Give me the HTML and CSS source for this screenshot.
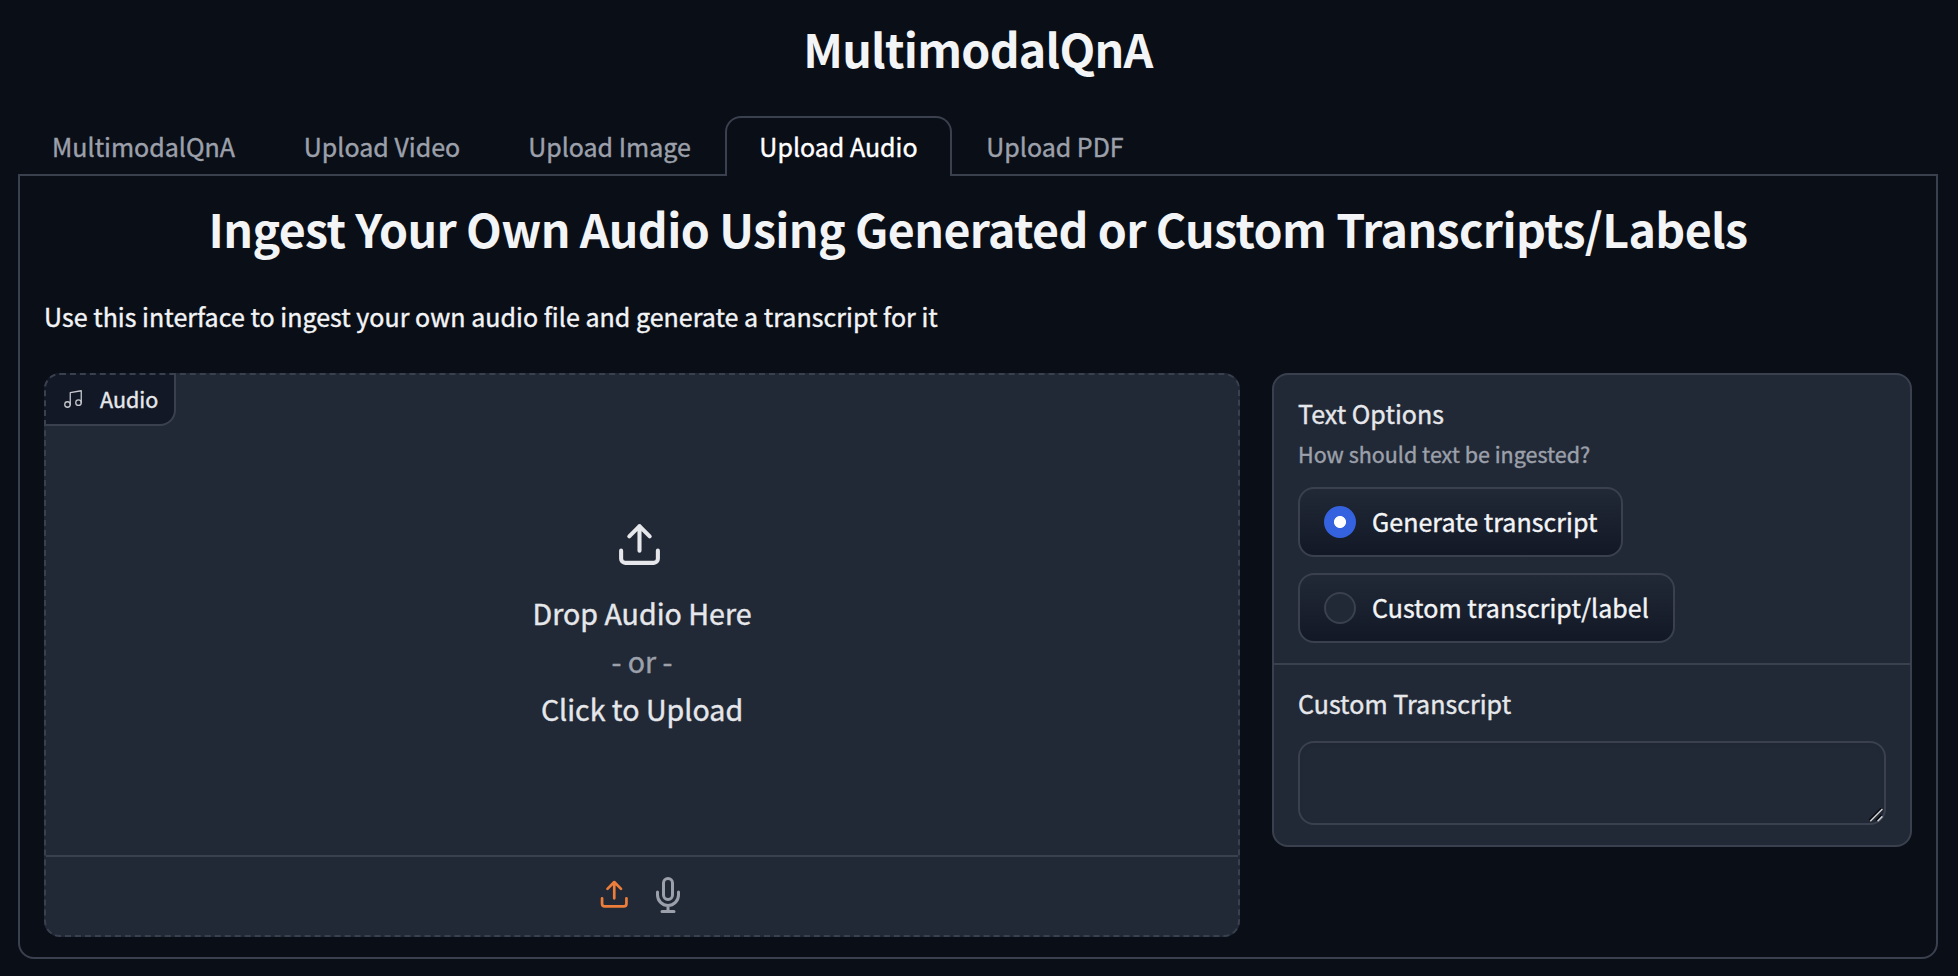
FILE: index.html
```html
<!DOCTYPE html>
<html lang="en">
<head>
<meta charset="utf-8">
<title>MultimodalQnA</title>
<link rel="stylesheet" href="styles.css">
</head>
<body>
<main class="app">
  <h1 class="title"><span class="app-name">MultimodalQnA</span></h1>
  <nav class="tabs">
    <button class="tab tab-qna">MultimodalQnA</button>
    <button class="tab tab-video">Upload Video</button>
    <button class="tab tab-image">Upload Image</button>
    <button class="tab tab-audio active">Upload Audio</button>
    <button class="tab tab-pdf">Upload PDF</button>
  </nav>
  <section class="panel">
    <h2 class="title"><span class="heading">Ingest Your Own Audio Using Generated or Custom Transcripts/Labels</span></h2>
    <p class="intro">Use this interface to ingest your own audio file and generate a transcript for it</p>
    <div class="row">
      <div class="audio">
        <div class="audio-label">
          <svg class="music" viewBox="0 0 24 24"><path d="M9 18V5l12-2v13"/><circle cx="6" cy="18" r="3"/><circle cx="18" cy="16" r="3"/></svg>
          <span>Audio</span>
        </div>
        <div class="drop">
          <svg class="upload" viewBox="0 0 24 24"><path d="M21 15v4a2 2 0 0 1-2 2H5a2 2 0 0 1-2-2v-4M17 8l-5-5-5 5M12 3v12"/></svg>
          <span class="drop-main">Drop Audio Here</span>
          <span class="drop-or">- or -</span>
          <span class="drop-click">Click to Upload</span>
        </div>
        <div class="sources">
          <svg class="source-upload" viewBox="0 0 24 24"><path d="M21 15v4a2 2 0 0 1-2 2H5a2 2 0 0 1-2-2v-4M17 8l-5-5-5 5M12 3v12"/></svg>
          <svg class="source-mic" viewBox="0 0 24 24"><path d="M12 1a3 3 0 0 0-3 3v8a3 3 0 0 0 6 0V4a3 3 0 0 0-3-3zM19 10v2a7 7 0 0 1-14 0v-2M12 19v4M8 23h8"/></svg>
        </div>
      </div>
      <div class="form">
        <div class="options">
          <div class="label">Text Options</div>
          <div class="info">How should text be ingested?</div>
          <div class="choices">
            <label class="choice choice-generate"><span class="radio checked"></span><span>Generate transcript</span></label>
            <label class="choice choice-custom"><span class="radio"></span><span>Custom transcript/label</span></label>
          </div>
        </div>
        <div class="custom">
          <div class="label">Custom Transcript</div>
          <div class="field">
            <textarea class="input"></textarea>
            <svg class="grip" viewBox="0 0 14 14"><path class="grip-dark" d="M0 12.5L12.5 0M7 12.5L12.5 7"/><path class="grip-light" d="M1.2 13.2L13.4 1M8.6 13.2l4.8-4.8"/></svg>
          </div>
        </div>
      </div>
    </div>
  </section>
</main>
</body>
</html>
```
FILE: styles.css
```css
* { box-sizing: border-box; }

body {
  margin: 0;
  background: #0a0e17;
  color: #f3f4f6;
  font-family: "Noto Sans CJK JP", "Noto Sans", sans-serif;
  font-size: 25px;
  -webkit-text-stroke: 0.4px currentColor;
}

svg {
  display: block;
  flex: none;
  fill: none;
  stroke: currentColor;
  stroke-width: 2;
  stroke-linecap: round;
  stroke-linejoin: round;
}

.app { padding: 18px 20px 0 18px; height: 976px; overflow: hidden; }

.title {
  margin: 0;
  font-size: 46.5px;
  font-weight: 700;
  line-height: 60px;
  letter-spacing: -0.62px;
  text-align: center;
  white-space: nowrap;
  -webkit-text-stroke: 0;
}
.app-name { letter-spacing: -0.75px; }

.tabs { display: flex; margin-top: 38px; }

.tab {
  height: 60px;
  padding: 0 1px 2px 0;
  border: 2px solid transparent;
  border-bottom: 0;
  border-radius: 16px 16px 0 0;
  background: none;
  color: #9ca0ab;
  font: inherit;
  line-height: 56px;
  white-space: nowrap;
}
.tab-qna { width: 252px; }
.tab-video { width: 225px; }
.tab-image { width: 230px; }
.tab-audio { width: 227px; }
.tab-pdf { width: 207px; }
.tab.active {
  position: relative;
  padding-right: 0;
  border-color: #3a404e;
  background: #0a0e17;
  color: #fff;
}

.panel {
  height: 785px;
  margin-top: -2px;
  padding: 22px 24px 0;
  border: 2px solid #3a404e;
  border-radius: 0 0 16px 16px;
}

.intro { margin: 38px 0 37px; line-height: 40px; letter-spacing: 0.03px; white-space: nowrap; }

.row { display: flex; align-items: flex-start; gap: 32px; }

.audio {
  position: relative;
  display: flex;
  flex-direction: column;
  width: 1196px;
  height: 564px;
  border: 2px dashed #3a404e;
  border-radius: 16px;
  background: #222936;
  color: #e6e7eb;
}

.audio-label {
  position: absolute;
  top: -2px;
  left: -2px;
  display: flex;
  align-items: center;
  gap: 16.5px;
  width: 132px;
  height: 53px;
  padding: 0 0 1px 15.5px;
  border: 2px solid #3a404e;
  border-top-style: dashed;
  border-left-style: dashed;
  border-radius: 16px 0 16px 0;
  background: #121825;
  font-size: 21.5px;
  line-height: 46px;
}
.music { width: 22px; height: 22px; color: #c6c8cd; stroke-width: 1.4; }

.drop {
  display: flex;
  flex: 1;
  flex-direction: column;
  align-items: center;
  padding-top: 145px;
  font-size: 28.6px;
  line-height: 48px;
}
.upload { width: 49px; height: 49px; margin: 0 6px 20px 0; }
.drop-or { color: #9ca0ab; }

.sources {
  display: flex;
  align-items: center;
  justify-content: center;
  gap: 20px;
  height: 80px;
  padding-bottom: 3px;
  border-top: 2px solid #3a404e;
}
.source-upload { width: 32.5px; height: 32.5px; margin-bottom: 1px; color: #ed7d3b; }
.source-mic { width: 36px; height: 36px; color: #9ca0ab; }

.form {
  width: 640px;
  height: 474px;
  border: 2px solid #3a404e;
  border-radius: 16px;
  background: #222936;
}
.options { height: 290px; padding: 18px 24px 0; border-bottom: 2px solid #3a404e; }
.label { color: #e6e7eb; line-height: 40px; letter-spacing: 0.04px; }
.info { margin-top: 5px; color: #9ca0ab; font-size: 21.5px; line-height: 32px; }
.choices { display: flex; flex-direction: column; gap: 16px; margin-top: 17px; }

.choice {
  display: flex;
  align-items: flex-start;
  gap: 16px;
  height: 70px;
  padding-left: 24px;
  border: 2px solid #3a404e;
  border-radius: 16px;
  background: linear-gradient(#222936, #121825);
  line-height: 64px;
  letter-spacing: 0.04px;
  white-space: nowrap;
}
.choice-generate { width: 325px; }
.choice-custom { width: 377px; }

.radio {
  flex: none;
  width: 32px;
  height: 32px;
  margin-top: 17px;
  border: 2px solid #3a404e;
  border-radius: 50%;
  background: #222936;
}
.radio.checked {
  border-color: #3562de;
  background: radial-gradient(circle, #fff 5.6px, #3562de 6.4px);
}

.custom { padding: 18px 24px 0; }
.field { position: relative; margin-top: 18px; }
.input {
  display: block;
  width: 588px;
  height: 84px;
  border: 2px solid #3a404e;
  border-radius: 16px;
  background: #222936;
  box-shadow: inset 0 2px 4px rgba(0, 0, 0, 0.06);
  resize: none;
}
.grip { position: absolute; right: 3px; bottom: 3px; width: 14px; height: 14px; stroke-linecap: butt; }
.grip-dark { stroke: #05070b; stroke-width: 1.6; }
.grip-light { stroke: #c9cacc; stroke-width: 1.6; }
```
